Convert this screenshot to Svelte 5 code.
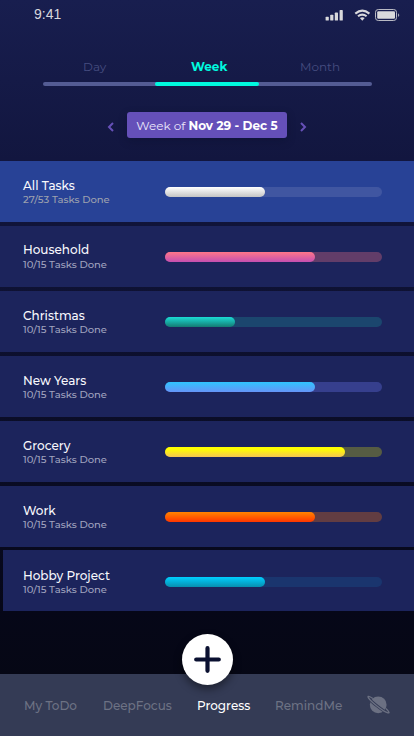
<script>
  const tasks = [
    { name: 'All Tasks', done: '27/53', width: 100, from: '#ffffff', to: '#c4c4c4', track: '#4056a1' },
    { name: 'Household', done: '10/15', width: 150, from: '#ff7689', to: '#c44fb1', track: '#623d69' },
    { name: 'Christmas', done: '10/15', width: 70, from: '#1cdcd5', to: '#147a72', track: '#1b466e' },
    { name: 'New Years', done: '10/15', width: 150, from: '#2fc5ff', to: '#6694f8', track: '#363f8d' },
    { name: 'Grocery', done: '10/15', width: 180, from: '#ffff00 20%', to: '#f5c551', track: '#565c43' },
    { name: 'Work', done: '10/15', width: 150, from: '#ff8500', to: '#ff3500', track: '#623d42' },
    { name: 'Hobby Project', done: '10/15', width: 100, from: '#00cfff', to: '#078eaf', track: '#1a356e' }
  ];
</script>

<main class="screen">
  <header class="status">
    <span class="time">9:41</span>
    <svg class="indicators" width="76" height="14" viewBox="0 0 76 14" fill="#d9d9dc">
      <rect x=".6" y="8.8" width="3.2" height="3.8" rx=".7" />
      <rect x="5.2" y="6.8" width="3.2" height="5.8" rx=".7" />
      <rect x="9.8" y="4.5" width="3.2" height="8.1" rx=".7" />
      <rect x="14.6" y="2" width="3.2" height="10.6" rx=".7" />
      <g fill="none" stroke="#d9d9dc" stroke-width="2.1">
        <path d="M30.3 5.6Q37.3-.3 44.4 5.6" />
        <path d="M33 8.3Q37.3 4.8 41.6 8.3" />
      </g>
      <path d="M34.9 10.1Q37.3 8.3 39.7 10.1L37.3 12.7Z" />
      <rect x="50.5" y="1.5" width="21" height="11" rx="2.8" fill="none" stroke="#b9bac4" />
      <rect x="52.2" y="3.2" width="17.8" height="7.6" rx="1.2" />
      <path d="M73 5.2Q75.6 7.1 73 9Z" fill="#a4a5b5" />
    </svg>
  </header>

  <nav class="tabs">
    <div class="labels">
      <span class="day">Day</span>
      <span class="week">Week</span>
      <span class="month">Month</span>
    </div>
    <div class="line"><div class="active-line"></div></div>
  </nav>

  <div class="picker">
    <svg width="8" height="10" viewBox="0 0 8 10"><path d="M6 1L2 5l4 4" /></svg>
    <div class="range"><span class="light">Week of</span><b>Nov 29 - Dec 5</b></div>
    <svg width="8" height="10" viewBox="0 0 8 10"><path d="M2 1l4 4-4 4" /></svg>
  </div>

  <section class="list">
    {#each tasks as task}
      <article class="row">
        <div class="copy">
          <h2>{task.name}</h2>
          <p>{task.done} Tasks Done</p>
        </div>
        <div class="track" style="background: {task.track}">
          <div class="fill" style="width: {task.width}px; background: linear-gradient({task.from}, {task.to})"></div>
        </div>
      </article>
    {/each}
  </section>

  <footer class="bottom">
    <span class="item todo">My ToDo</span>
    <span class="item focus">DeepFocus</span>
    <span class="item progress">Progress</span>
    <span class="item remind">RemindMe</span>
    <svg class="planet" width="24" height="20" viewBox="0 0 24 20">
      <circle cx="11.2" cy="9.8" r="8.4" fill="#6b7082" />
      <g transform="rotate(38 11.4 9.8)" fill="none">
        <path d="M3 8.3C-1 8.8-2.4 9.5-.4 10.5c4 1.4 19.6 1.4 23.6 0 2-1 .6-1.7-3.4-2.2" stroke="#343b55" stroke-width="3" />
        <path d="M3.2 8.2C-1.4 8.5-3.4 9.5-.4 10.6c4 1.4 19.6 1.4 23.6 0 3-1.1 1-2.1-3.6-2.4" stroke="#6b7082" stroke-width="1.3" />
      </g>
    </svg>
    <button class="add" aria-label="Add task">
      <svg width="27" height="27" viewBox="0 0 27 27"><path d="M13.5 2.2v22.6M2.2 13.5h22.6" /></svg>
    </button>
  </footer>
</main>

<style>
  :global(body) { margin: 0; }
  .screen {
    width: 414px;
    height: 736px;
    display: flex;
    flex-direction: column;
    overflow: hidden;
    background: linear-gradient(#181e4f 0, #12163f 160px, #0c0f2c 370px, #060718 610px, #050712 100%);
    font-family: Montserrat, Inter, sans-serif;
    box-sizing: border-box;
  }
  .status {
    height: 30px;
    box-sizing: border-box;
    padding: 6px 13px 0 34px;
    display: flex;
    justify-content: space-between;
  }
  .time { font: 14px/16px "Liberation Sans", sans-serif; color: #d7d7dd; }
  .indicators { margin-top: 2px; flex: none; }
  .tabs { height: 56px; padding: 0 42px 0 43px; display: flex; flex-direction: column; }
  .labels { display: flex; height: 23px; padding: 29px 0 0; line-height: 15px; font-size: 12px; color: #464d80; font-weight: 400; }
  .labels span { white-space: nowrap; }
  .day { width: 108px; padding-left: 40px; box-sizing: border-box; }
  .week { width: 109px; padding-left: 40px; box-sizing: border-box; color: #00f9df; font-weight: 700; }
  .month { padding-left: 40px; }
  .line { height: 4px; background: #545c94; border-radius: 2px; }
  .active-line { width: 104px; height: 4px; margin-left: 112px; border-radius: 2px; background: #00f9df; }
  .picker { height: 26px; margin: 26px 0 23px; display: flex; align-items: center; justify-content: center; gap: 12px; }
  .picker svg { fill: none; stroke: #6650b8; stroke-width: 2; margin-top: 3px; }
  .range {
    display: flex;
    align-items: center;
    justify-content: center;
    gap: 3px;
    width: 160px;
    height: 26px;
    border-radius: 3px;
    background: #6550b9;
    color: #fff;
    font-size: 12px;
    white-space: nowrap;
    box-shadow: 0 3px 8px #080b2540;
  }
  .light { font-weight: 400; color: #ece8fb; }
  .list { display: flex; flex-direction: column; gap: 4px; }
  .row { display: flex; height: 61px; background: #1c245c; }
  .row:first-child { background: #284296; }
  .row:last-child { margin: -1px 0 0 3px; }
  .copy { width: 142px; padding: 17px 0 0 23px; white-space: nowrap; }
  .row:last-child .copy { padding: 18px 0 0 20px; }
  h2 { margin: 0; font-size: 12px; line-height: 16px; font-weight: 500; color: #f8f8fc; }
  .row:nth-child(2) h2 { margin-top: -1px; margin-bottom: 1px; }
  p { margin: 0; font-size: 10px; line-height: 12px; font-weight: 500; color: #a0a3bf; }
  .row:first-child p { color: #9da1ae; }
  .track { width: 217px; height: 10px; margin-top: 26px; border-radius: 5px; }
  .row:last-child .track { margin-top: 27px; }
  .fill { height: 10px; border-radius: 5px; }
  .bottom {
    position: relative;
    display: flex;
    align-items: center;
    height: 62px;
    margin-top: auto;
    padding-left: 24px;
    background: #343b55;
    color: #6d7284;
    font-size: 12px;
    font-weight: 500;
  }
  .item { white-space: nowrap; line-height: 16px; padding-top: 1px; }
  .todo { width: 79px; }
  .focus { width: 94px; }
  .progress { width: 78px; color: #fff; }
  .remind { width: 92px; }
  .planet { flex: none; overflow: visible; }
  .add {
    position: absolute;
    left: 182px;
    top: -40px;
    width: 51px;
    height: 51px;
    padding: 0;
    border: 0;
    border-radius: 50%;
    background: #fff;
    display: flex;
    align-items: center;
    justify-content: center;
    box-shadow: 0 4px 8px #00000070;
  }
  .add path { stroke: #0a1030; stroke-width: 4.2; stroke-linecap: round; }
</style>
